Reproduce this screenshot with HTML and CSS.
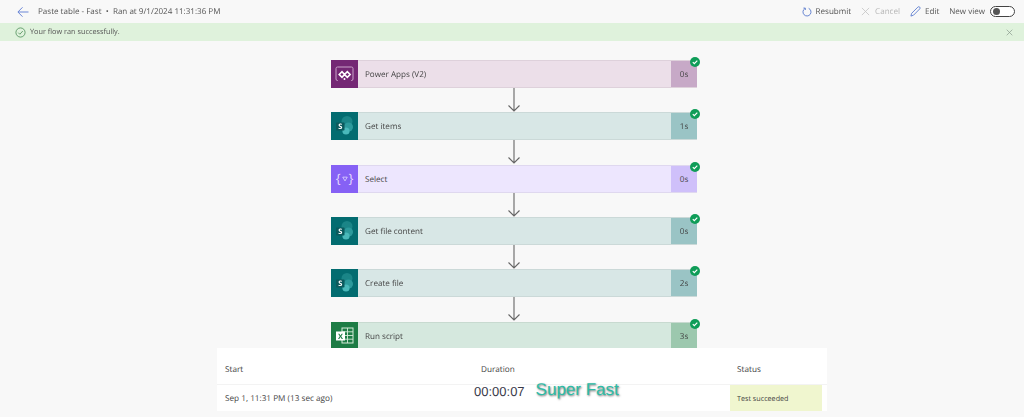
FILE: index.html
```html
<!DOCTYPE html>
<html lang="en">
<head>
<meta charset="utf-8">
<title>Paste table - Fast</title>
<link rel="stylesheet" href="styles.css">
</head>
<body>
<div class="page">
  <header class="topbar">
    <div class="crumb">
      <svg class="back" viewBox="0 0 12 12" width="12" height="12"><path d="M11.500 6H1M5.500 1.300L.9 6l4.600 4.700" fill="none" stroke="#6b86d6" stroke-width="1"/></svg>
      <span class="title">Paste table - Fast&nbsp; • &nbsp;Ran at 9/1/2024 11:31:36 PM</span>
    </div>
    <div class="actions">
      <span class="action tight"><svg viewBox="0 0 12 12" width="10" height="10"><path d="M3.400 1.900A4.800 4.800 0 1 0 8 1.600" fill="none" stroke="#4a6fc9" stroke-width="1"/><path d="M1.700 1.300h2.300v2.300" fill="none" stroke="#4a6fc9" stroke-width="1"/></svg>Resubmit</span>
      <span class="action muted"><svg viewBox="0 0 10 10" width="9" height="9"><path d="M1 1l8 8M9 1L1 9" stroke="#c4c4c4" stroke-width=".9"/></svg>Cancel</span>
      <span class="action tight"><svg viewBox="0 0 12 12" width="11" height="11"><path d="M1 11l.8-3L8.600 1.200a1.300 1.300 0 0 1 2 2L3.900 10z" fill="none" stroke="#5f7fd0" stroke-width="1"/></svg>Edit</span>
      <span class="action newview">New view<span class="toggle"><span class="knob"></span></span></span>
    </div>
  </header>
  <div class="banner">
    <div class="banner-msg">
      <svg viewBox="0 0 12 12" width="11" height="11"><circle cx="6" cy="6" r="5" fill="none" stroke="#4f8f5a" stroke-width=".9"/><path d="M3.600 6.200l1.700 1.700 3.200-3.500" fill="none" stroke="#4f8f5a" stroke-width=".9"/></svg>
      <span>Your flow ran successfully.</span>
    </div>
    <svg viewBox="0 0 10 10" width="7" height="7"><path d="M1 1l8 8M9 1L1 9" stroke="#8a9a8c" stroke-width="1"/></svg>
  </div>
  <main class="flow">
    <div class="step apps">
      <div class="ico"><svg viewBox="0 0 27 28" width="27" height="28"><path d="M7 20.500h-.5A1.500 1.500 0 0 1 5 19V8.500A1.500 1.500 0 0 1 6.500 7h14A1.500 1.500 0 0 1 22 8.500V19a1.500 1.500 0 0 1-1.500 1.500H20" fill="none" stroke="#c9a3c9" stroke-width="1"/><path d="M13.500 14.500l2.800-2.800 2.800 2.800-2.800 2.800zM8.200 14.500l2.800-2.800 2.500 2.800L11 17.300z" fill="none" stroke="#fff" stroke-width="1.600"/><circle cx="13.500" cy="19" r="1" fill="#fff"/></svg></div>
      <div class="name">Power Apps (V2)</div><div class="time">0s</div><span class="ok"><svg viewBox="0 0 10 10" width="10" height="10"><path d="M2.800 5.200l1.500 1.500 3-3" fill="none" stroke="#fff" stroke-width="1.200"/></svg></span>
    </div>
    <svg class="arrow" viewBox="0 0 14 24" width="14" height="24"><path d="M7 0v23M1.500 17.500L7 23l5.500-5.500" fill="none" stroke="#666" stroke-width="1.100"/></svg>
    <div class="step sp">
      <div class="ico"><svg viewBox="0 0 27 28" width="27" height="28"><circle cx="16" cy="9.500" r="5.500" fill="#1a8587"/><circle cx="17.500" cy="15" r="4.500" fill="#2c9a9c"/><circle cx="15" cy="19" r="3.600" fill="#49b9ba"/><rect x="5" y="10.500" width="8.500" height="8" rx=".8" fill="#0a5a5d"/><text x="9.200" y="17" class="glyph">S</text></svg></div>
      <div class="name">Get items</div><div class="time">1s</div><span class="ok"><svg viewBox="0 0 10 10" width="10" height="10"><path d="M2.800 5.200l1.500 1.500 3-3" fill="none" stroke="#fff" stroke-width="1.200"/></svg></span>
    </div>
    <svg class="arrow" viewBox="0 0 14 24" width="14" height="24"><path d="M7 0v23M1.500 17.500L7 23l5.500-5.500" fill="none" stroke="#666" stroke-width="1.100"/></svg>
    <div class="step sel">
      <div class="ico"><span class="braces">{<svg viewBox="0 0 8 8" width="6" height="6"><path d="M1 1.500h6L4 6.500z" fill="none" stroke="#fff" stroke-width=".8"/></svg>}</span></div>
      <div class="name">Select</div><div class="time">0s</div><span class="ok"><svg viewBox="0 0 10 10" width="10" height="10"><path d="M2.800 5.200l1.500 1.500 3-3" fill="none" stroke="#fff" stroke-width="1.200"/></svg></span>
    </div>
    <svg class="arrow" viewBox="0 0 14 24" width="14" height="24"><path d="M7 0v23M1.500 17.500L7 23l5.500-5.500" fill="none" stroke="#666" stroke-width="1.100"/></svg>
    <div class="step sp">
      <div class="ico"><svg viewBox="0 0 27 28" width="27" height="28"><circle cx="16" cy="9.500" r="5.500" fill="#1a8587"/><circle cx="17.500" cy="15" r="4.500" fill="#2c9a9c"/><circle cx="15" cy="19" r="3.600" fill="#49b9ba"/><rect x="5" y="10.500" width="8.500" height="8" rx=".8" fill="#0a5a5d"/><text x="9.200" y="17" class="glyph">S</text></svg></div>
      <div class="name">Get file content</div><div class="time">0s</div><span class="ok"><svg viewBox="0 0 10 10" width="10" height="10"><path d="M2.800 5.200l1.500 1.500 3-3" fill="none" stroke="#fff" stroke-width="1.200"/></svg></span>
    </div>
    <svg class="arrow" viewBox="0 0 14 24" width="14" height="24"><path d="M7 0v23M1.500 17.500L7 23l5.500-5.500" fill="none" stroke="#666" stroke-width="1.100"/></svg>
    <div class="step sp">
      <div class="ico"><svg viewBox="0 0 27 28" width="27" height="28"><circle cx="16" cy="9.500" r="5.500" fill="#1a8587"/><circle cx="17.500" cy="15" r="4.500" fill="#2c9a9c"/><circle cx="15" cy="19" r="3.600" fill="#49b9ba"/><rect x="5" y="10.500" width="8.500" height="8" rx=".8" fill="#0a5a5d"/><text x="9.200" y="17" class="glyph">S</text></svg></div>
      <div class="name">Create file</div><div class="time">2s</div><span class="ok"><svg viewBox="0 0 10 10" width="10" height="10"><path d="M2.800 5.200l1.500 1.500 3-3" fill="none" stroke="#fff" stroke-width="1.200"/></svg></span>
    </div>
    <svg class="arrow" viewBox="0 0 14 24" width="14" height="24"><path d="M7 0v23M1.500 17.500L7 23l5.500-5.500" fill="none" stroke="#666" stroke-width="1.100"/></svg>
    <div class="step xl">
      <div class="ico"><svg viewBox="0 0 27 28" width="27" height="28"><rect x="11" y="6" width="11" height="15" fill="none" stroke="#d5ead9" stroke-width="1"/><path d="M11 9.800h11M11 13.500h11M11 17.200h11M16.500 6v15" stroke="#d5ead9" stroke-width=".9"/><rect x="5" y="9.500" width="9" height="9" fill="#fff"/><text x="9.500" y="16.500" class="glyph xl-glyph">X</text></svg></div>
      <div class="name">Run script</div><div class="time">3s</div><span class="ok"><svg viewBox="0 0 10 10" width="10" height="10"><path d="M2.800 5.200l1.500 1.500 3-3" fill="none" stroke="#fff" stroke-width="1.200"/></svg></span>
    </div>
  </main>
  <section class="runs">
    <div class="runs-head">
      <span class="col-start">Start</span><span class="col-dur">Duration</span><span class="col-status">Status</span>
    </div>
    <div class="runs-row">
      <span class="col-start">Sep 1, 11:31 PM (13 sec ago)</span><span class="col-dur"></span><span class="col-status badge">Test succeeded</span>
    </div>
  </section>
  <div class="callout"><span class="clock">00:00:07</span><span class="fast">Super Fast</span></div>
</div>
</body>
</html>
```
FILE: styles.css
```css
* { box-sizing: border-box; }
html, body { margin: 0; height: 100%; }
body { background: #f8f8f8; font-family: "Open Sans", "Noto Sans", sans-serif; color: #444; overflow: hidden; text-rendering: geometricPrecision; }
.page { position: relative; width: 1024px; height: 417px; overflow: hidden; filter: blur(.3px); }

.topbar { height: 23px; display: flex; justify-content: space-between; align-items: center; padding: 0 9px 0 17px; font-size: 8.050px; color: #555; }
.crumb { display: flex; align-items: center; gap: 9px; }
.actions { display: flex; align-items: center; gap: 10px; }
.action { display: flex; align-items: center; gap: 5px; }
.action.tight { gap: 4px; }
.action.muted { color: #b5b5b5; }
.newview { gap: 5px; }
.toggle { width: 25px; height: 11px; border: 1px solid #444; border-radius: 6px; background: #fff; display: flex; align-items: center; padding-left: 2px; }
.knob { width: 7px; height: 7px; border-radius: 50%; background: #555; }

.banner { height: 18px; background: #dff2dc; display: flex; align-items: center; justify-content: space-between; padding: 0 11px 0 15px; font-size: 7.300px; color: #555; }
.banner-msg { display: flex; align-items: center; gap: 4px; }

.flow { display: flex; flex-direction: column; align-items: center; padding-top: 18.800px; margin-left: 4px; }
.arrow { display: block; margin: 0 0 .4px; flex: none; }
.step { position: relative; width: 366px; height: 28px; flex: none; display: flex; align-items: center; font-size: 8.100px; color: #444; border: 1px solid rgba(0,0,0,.06); border-width: 1px 0; }
.ico { width: 27px; height: 28px; display: flex; align-items: center; justify-content: center; flex: none; }
.name { flex: 1; padding: 1px 0 0 7px; }
.time { width: 26px; height: 100%; padding-top: 1px; display: flex; align-items: center; justify-content: center; }
.ok { position: absolute; right: -3px; top: -4px; width: 10px; height: 10px; border-radius: 50%; background: #0f9d58; display: flex; }
.apps { background: #ecdfe9; } .apps .ico { background: #742774; } .apps .time { background: #c7a9c7; }
.sp { background: #d8e7e6; } .sp .ico { background: #036c70; } .sp .time { background: #9ac4c5; }
.sel { background: #ede6fe; } .sel .ico { background: #8661f5; } .sel .time { background: #cfc0fa; }
.xl { background: #d5e8de; } .xl .ico { background: #1d7c45; } .xl .time { background: #9cc8ae; }
.glyph { font-size: 7.500px; font-weight: 700; fill: #fff; text-anchor: middle; font-family: "Open Sans", sans-serif; }
.xl-glyph { fill: #1d7c45; }
.braces { color: #e6dcff; font-size: 13px; display: flex; align-items: center; gap: 1px; line-height: 1; }

.runs { position: absolute; left: 217px; top: 348px; width: 610px; height: 63px; background: #fff; font-size: 8.200px; color: #444; }
.runs-head { height: 37px; padding-top: 6px; display: flex; align-items: center; border-bottom: 1px solid #f3f3f3; }
.runs-row { height: 26px; padding-top: 1px; display: flex; align-items: center; }
.col-start { width: 264px; padding-left: 8px; }
.col-dur { width: 256px; }
.col-status { padding-left: 0; }
.badge { align-self: stretch; width: 92px; margin: -1px 0 0 -7px; background: #f0f6cf; display: flex; align-items: center; padding: 1px 0 0 7px; font-size: 7.200px; }

.callout { position: absolute; left: 474px; top: 380px; display: flex; align-items: center; gap: 11px; font-family: "Liberation Sans", sans-serif; }
.clock { font-size: 13px; color: #3a3a4a; margin-top: 3px; }
.fast { font-size: 17px; color: #2cbca6; text-shadow: 1px 1px 2px rgba(0,0,0,.55); }
```
